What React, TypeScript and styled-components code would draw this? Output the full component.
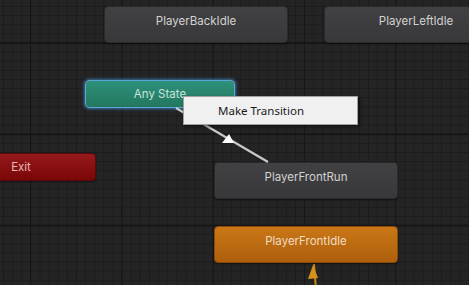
import { ReactElement } from 'react';
import styled, { createGlobalStyle, css } from 'styled-components';

const GlobalStyle = createGlobalStyle`
  html, body {
    margin: 0;
    padding: 0;
    background: #232323;
    overflow: hidden;
  }
`;

type NodeKind = 'default' | 'any' | 'exit' | 'entry';

const kindStyles = {
  default: css`
    background: linear-gradient(#414143, #38383a);
    color: #d2d2d2;
    border: 1px solid #2b2b2d;
  `,
  any: css`
    background: linear-gradient(#2e917a, #23775f);
    color: #c8e4dc;
    border: 1px solid #5aa6d8;
    box-shadow: 0 0 3px 1px rgba(70, 150, 220, 0.7);
  `,
  exit: css`
    background: linear-gradient(#951a1c, #7a0606);
    color: #e6b8b8;
    border: 1px solid #5a0a0a;
  `,
  entry: css`
    background: linear-gradient(#c97716, #ae5f0c);
    color: #f1dcc4;
    border: 1px solid #8a4a08;
  `,
};

const Canvas = styled.div`
  position: relative;
  width: 469px;
  height: 285px;
  overflow: hidden;
  background-color: #242424;
  background-image:
    linear-gradient(to right, #161616 1px, transparent 1px),
    linear-gradient(to bottom, #161616 2px, transparent 2px),
    linear-gradient(to right, #1c1c1c 1px, transparent 1px),
    linear-gradient(to bottom, #1c1c1c 1px, transparent 1px);
  background-size: 91.3px 91.3px, 91.3px 91.3px, 9.13px 9.13px, 9.13px 9.13px;
  background-position: 30px 0, 0 42px, 3px 0, 0 6px;
  font-family: Inter, 'Noto Sans', sans-serif;
`;

const StateNode = styled.div<{ $kind: NodeKind; $tall?: boolean }>`
  position: absolute;
  box-sizing: border-box;
  display: flex;
  justify-content: center;
  align-items: ${(p) => (p.$tall ? 'flex-start' : 'center')};
  padding-top: ${(p) => (p.$tall ? '7px' : '0')};
  height: ${(p) => (p.$tall ? '37px' : '28px')};
  border-radius: 4px;
  font-size: 11.5px;
  box-shadow: 0 1px 2px rgba(0, 0, 0, 0.5);
  ${(p) => kindStyles[p.$kind]}
`;

const Links = styled.svg`
  position: absolute;
  left: 0;
  top: 0;
  pointer-events: none;
`;

const ContextMenu = styled.div`
  position: absolute;
  left: 183px;
  top: 96px;
  width: 175px;
  height: 29px;
  box-sizing: border-box;
  background: #f0f0f0;
  border: 1px solid #a0a0a0;
  box-shadow: 2px 2px 3px rgba(0, 0, 0, 0.45);
  display: flex;
  align-items: center;
  padding-left: 34px;
  font-family: 'Noto Sans', 'Open Sans', sans-serif;
  font-size: 11.5px;
  color: #1a1a1a;
`;

type StateDef = {
  name: string;
  kind: NodeKind;
  x: number;
  y: number;
  w: number;
  tall?: boolean;
};

const states: StateDef[] = [
  { name: 'PlayerBackIdle', kind: 'default', x: 104, y: 6, w: 184, tall: true },
  { name: 'PlayerLeftIdle', kind: 'default', x: 324, y: 6, w: 184, tall: true },
  { name: 'Any State', kind: 'any', x: 85, y: 80, w: 150 },
  { name: 'Exit', kind: 'exit', x: -54, y: 153, w: 150 },
  { name: 'PlayerFrontRun', kind: 'default', x: 214, y: 162, w: 184, tall: true },
  { name: 'PlayerFrontIdle', kind: 'entry', x: 214, y: 226, w: 184, tall: true },
];

export default function App(): ReactElement {
  return (
    <>
      <GlobalStyle />
      <Canvas>
        <Links width={469} height={285}>
          {/* entry transition coming up into PlayerFrontIdle */}
          <line x1={314} y1={264} x2={316} y2={290} stroke='#c88a14' strokeWidth={2} />
          <polygon points='313,265 308,279 318,278' fill='#d4921a' />
        </Links>
        {states.map((s) => (
          <StateNode
            key={s.name}
            $kind={s.kind}
            $tall={s.tall}
            style={{ left: s.x, top: s.y, width: s.w }}
          >
            {s.name}
          </StateNode>
        ))}
        <Links width={469} height={285}>
          {/* transition being dragged from Any State */}
          <line x1={176} y1={108} x2={268} y2={162} stroke='#c9c9c9' strokeWidth={2.2} />
          <polygon points='229,134 222,143 234,143' fill='#ffffff' />
        </Links>
        <ContextMenu>Make Transition</ContextMenu>
      </Canvas>
    </>
  );
}
